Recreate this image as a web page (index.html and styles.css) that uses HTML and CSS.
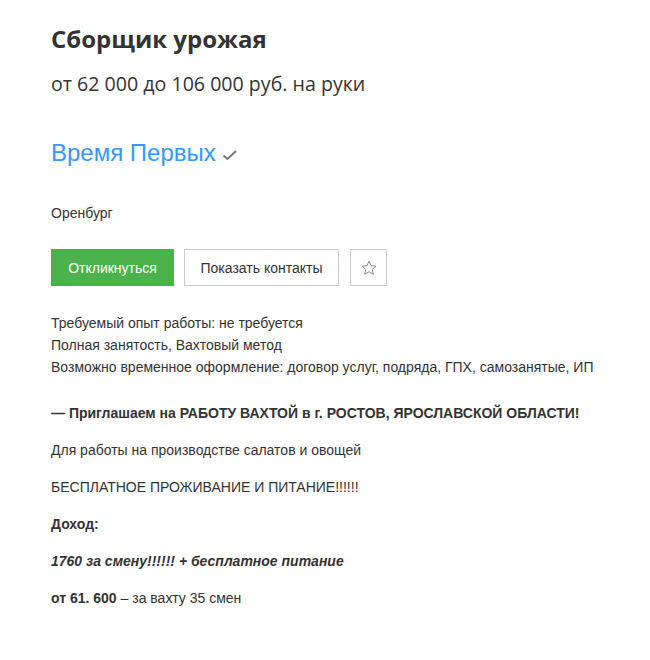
FILE: index.html
```html
<!DOCTYPE html>
<html lang="ru">
<head>
<meta charset="utf-8">
<link rel="stylesheet" href="styles.css">
</head>
<body>
<div class="page">
  <h1 class="title">Сборщик урожая</h1>
  <p class="salary">от 62 000 до 106 000 руб. на руки</p>
  <div class="company">
    <a class="company-link" href="#">Время Первых</a>
    <svg class="check" width="16" height="12" viewBox="0 0 16 12"><path d="M1.5 6.5 L5.5 10 L14 2" fill="none" stroke="#777" stroke-width="2"/></svg>
  </div>
  <p class="city">Оренбург</p>
  <div class="actions">
    <button class="btn btn-primary">Откликнуться</button>
    <button class="btn btn-secondary">Показать контакты</button>
    <button class="btn btn-icon"><svg width="18" height="18" viewBox="0 0 24 24"><path d="M12 2.8 L14.7 8.9 L21.3 9.5 L16.3 13.9 L17.8 20.4 L12 17 L6.2 20.4 L7.7 13.9 L2.7 9.5 L9.3 8.9 Z" fill="none" stroke="#888" stroke-width="1.3" stroke-linejoin="round"/></svg></button>
  </div>
  <div class="conditions">
    <p>Требуемый опыт работы: не требуется</p>
    <p>Полная занятость, Вахтовый метод</p>
    <p>Возможно временное оформление: договор услуг, подряда, ГПХ, самозанятые, ИП</p>
  </div>
  <div class="description">
    <p><strong>— Приглашаем на РАБОТУ ВАХТОЙ в г. РОСТОВ, ЯРОСЛАВСКОЙ ОБЛАСТИ!</strong></p>
    <p>Для работы на производстве салатов и овощей</p>
    <p>БЕСПЛАТНОЕ ПРОЖИВАНИЕ И ПИТАНИЕ!!!!!!</p>
    <p><strong>Доход:</strong></p>
    <p><strong><em>1760 за смену!!!!!! + бесплатное питание</em></strong></p>
    <p><strong>от 61. 600</strong> – за вахту 35 смен</p>
  </div>
</div>
</body>
</html>
```
FILE: styles.css
```css
html, body { margin: 0; padding: 0; background: #fff; }
body { font-family: "Liberation Sans", Arial, sans-serif; color: #333; font-size: 14px; }
.page { padding: 22px 51px 0 51px; }
.title { font-family: "Open Sans", sans-serif; font-weight: 700; font-size: 24px; line-height: 34px; margin: 0; color: #333; }
.salary { font-family: "Open Sans", sans-serif; font-size: 19.6px; line-height: 28px; margin: 14px 0 0; color: #333; }
.company { display: flex; align-items: center; gap: 6px; margin-top: 40px; height: 30px; }
.company-link { font-size: 24px; color: #3399ff; text-decoration: none; line-height: 30px; }
.check { margin-top: 4px; }
.city { margin: 35px 0 0; line-height: 20px; }
.actions { display: flex; gap: 10px; margin-top: 26px; }
.btn { font-family: "Liberation Sans", Arial, sans-serif; font-size: 14px; height: 37px; box-sizing: border-box; cursor: pointer; }
.btn-primary { background: #4bb24b; color: #fff; border: none; padding: 0 16px; width: 123px; }
.btn-secondary { background: #fff; color: #333; border: 1px solid #ccc; width: 155px; }
.btn-icon { background: #fff; border: 1px solid #ccc; width: 37px; display: flex; align-items: center; justify-content: center; padding: 0; margin-left: 1px; }
.conditions { margin-top: 26px; }
.conditions p { margin: 0; line-height: 22px; }
.description { margin-top: 25px; }
.description p { margin: 0 0 17px; line-height: 20px; }
```
